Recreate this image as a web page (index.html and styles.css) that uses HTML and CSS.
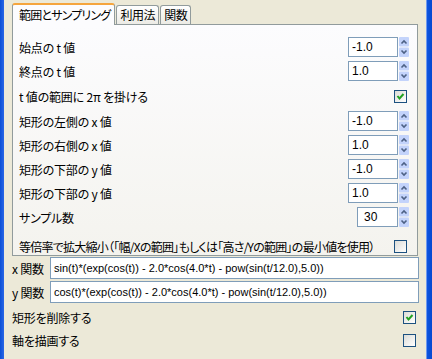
FILE: index.html
```html
<!DOCTYPE html>
<html lang="ja">
<head>
    <meta charset="UTF-8">
    <title>範囲とサンプリング</title>
    <link rel="stylesheet" href="styles.css">
</head>
<body>
    <div class="edge-left"></div>
    <div class="window">
        <div class="tabs">
            <div class="tab active">範囲とサンプリング</div>
            <div class="tab">利用法</div>
            <div class="tab">関数</div>
        </div>

        <div class="panel">
            <div class="row">
                <span>始点の t 値</span>
                <div class="spin"><div class="spin-box">-1.0</div><div class="spin-btns"></div></div>
            </div>
            <div class="row">
                <span>終点の t 値</span>
                <div class="spin"><div class="spin-box">1.0</div><div class="spin-btns"></div></div>
            </div>
            <div class="row row-check">
                <span>t 値の範囲に 2π を掛ける</span>
                <span class="check on"></span>
            </div>
            <div class="row">
                <span>矩形の左側の x 値</span>
                <div class="spin"><div class="spin-box">-1.0</div><div class="spin-btns"></div></div>
            </div>
            <div class="row">
                <span>矩形の右側の x 値</span>
                <div class="spin"><div class="spin-box">1.0</div><div class="spin-btns"></div></div>
            </div>
            <div class="row">
                <span>矩形の下部の y 値</span>
                <div class="spin"><div class="spin-box">-1.0</div><div class="spin-btns"></div></div>
            </div>
            <div class="row">
                <span>矩形の下部の y 値</span>
                <div class="spin"><div class="spin-box">1.0</div><div class="spin-btns"></div></div>
            </div>
            <div class="row">
                <span>サンプル数</span>
                <div class="spin"><div class="spin-box short">30</div><div class="spin-btns"></div></div>
            </div>
            <div class="row row-check last">
                <span class="long-label">等倍率で拡大縮小（「幅/Xの範囲」もしくは「高さ/Yの範囲」の最小値を使用）</span>
                <span class="check"></span>
            </div>
        </div>

        <div class="func-row">
            <span class="func-label">x 関数</span>
            <div class="text-box">sin(t)*(exp(cos(t)) - 2.0*cos(4.0*t) - pow(sin(t/12.0),5.0))</div>
        </div>
        <div class="func-row">
            <span class="func-label">y 関数</span>
            <div class="text-box">cos(t)*(exp(cos(t)) - 2.0*cos(4.0*t) - pow(sin(t/12.0),5.0))</div>
        </div>

        <div class="opt-row">
            <span>矩形を削除する</span>
            <span class="check on"></span>
        </div>
        <div class="opt-row">
            <span>軸を描画する</span>
            <span class="check"></span>
        </div>
    </div>
    <div class="edge-right"></div>
</body>
</html>
```

FILE: styles.css
```css
body {
    margin: 0;
    height: 359px;
    display: flex;
    background-color: #ece9d8;
    font-family: "Noto Sans CJK JP", sans-serif;
    font-size: 12px;
    font-feature-settings: "palt";
    letter-spacing: -0.2px;
    color: #000;
    overflow: hidden;
}
.edge-left {
    width: 4px;
    background: linear-gradient(to right, #0b4fd6, #2a67e6);
}
.edge-right {
    width: 6px;
    background: linear-gradient(to right, #6f99ee 0, #6f99ee 1px, #0d55e0 1px, #0648d0);
}
.window {
    flex: 1;
    padding: 0 8px;
}
.tabs {
    display: flex;
    align-items: flex-end;
    height: 24px;
}
.tab {
    height: 18px;
    line-height: 17px;
    padding: 0 3px;
    margin-right: 1px;
    letter-spacing: -0.4px;
    border: 1px solid #919b9c;
    border-bottom: none;
    border-radius: 3px 3px 0 0;
    background: linear-gradient(#ffffff, #ecebe5);
    position: relative;
}
.tab.active {
    height: 20px;
    line-height: 19px;
    padding: 0 4px 0 6px;
    letter-spacing: -0.8px;
    background: #fcfcfe;
    border-top: 2px solid #f5a53d;
    top: 1px;
    z-index: 1;
}
.panel {
    border: 1px solid #919b9c;
    background: linear-gradient(#fcfcfe, #f4f3ee);
    padding: 10px 8px 4px 6px;
    height: 216px;
}
.row {
    display: flex;
    align-items: center;
    justify-content: space-between;
    height: 24px;
}
.row-check {
    height: 26px;
    padding-right: 2px;
}
.row-check.last {
    margin-top: 4px;
}
.long-label {
    white-space: nowrap;
    letter-spacing: -0.75px;
}
.spin {
    display: flex;
    align-items: stretch;
    height: 20px;
}
.spin-box {
    width: 45px;
    border: 1px solid #7f9db9;
    background: #fff;
    padding-left: 3px;
    font-family: "Liberation Sans", Arial, sans-serif;
    font-size: 12px;
    letter-spacing: 0;
    line-height: 18px;
}
.spin-box.short {
    width: 33px;
    padding-left: 6px;
}
.spin-btns {
    width: 10px;
    margin-left: 1px;
    background:
        url("data:image/svg+xml;utf8,<svg xmlns='http://www.w3.org/2000/svg' width='10' height='20'><rect x='0' y='0' width='10' height='9.5' rx='1' fill='%23c3d3fb'/><rect x='0' y='10.5' width='10' height='9.5' rx='1' fill='%23c3d3fb'/><path d='M2.5 6.5 L5 4 L7.5 6.5' fill='none' stroke='%234d6185' stroke-width='1.6'/><path d='M2.5 13.5 L5 16 L7.5 13.5' fill='none' stroke='%234d6185' stroke-width='1.6'/></svg>") no-repeat;
}
.check {
    width: 11px;
    height: 11px;
    border: 1px solid #1c5180;
    background: linear-gradient(135deg, #dcdcd7, #ffffff);
    flex-shrink: 0;
}
.check.on {
    background:
        url("data:image/svg+xml;utf8,<svg xmlns='http://www.w3.org/2000/svg' width='11' height='11'><path d='M2.5 5 L4.5 7.5 L8.5 3' fill='none' stroke='%2321a121' stroke-width='2'/></svg>") no-repeat,
        linear-gradient(135deg, #dcdcd7, #ffffff);
}
.func-row {
    display: flex;
    align-items: center;
    height: 24px;
}
.func-label {
    width: 38px;
    white-space: nowrap;
}
.text-box {
    flex: 1;
    height: 20px;
    border: 1px solid #7f9db9;
    background: #fff;
    padding-left: 3px;
    font-family: "Liberation Sans", Arial, sans-serif;
    font-size: 11px;
    letter-spacing: 0;
    line-height: 20px;
    margin-right: -1px;
    white-space: nowrap;
    overflow: hidden;
}
.opt-row {
    display: flex;
    align-items: center;
    justify-content: space-between;
    height: 23px;
    padding-right: 2px;
}
.func-row + .opt-row {
    margin-top: 2px;
}
```
